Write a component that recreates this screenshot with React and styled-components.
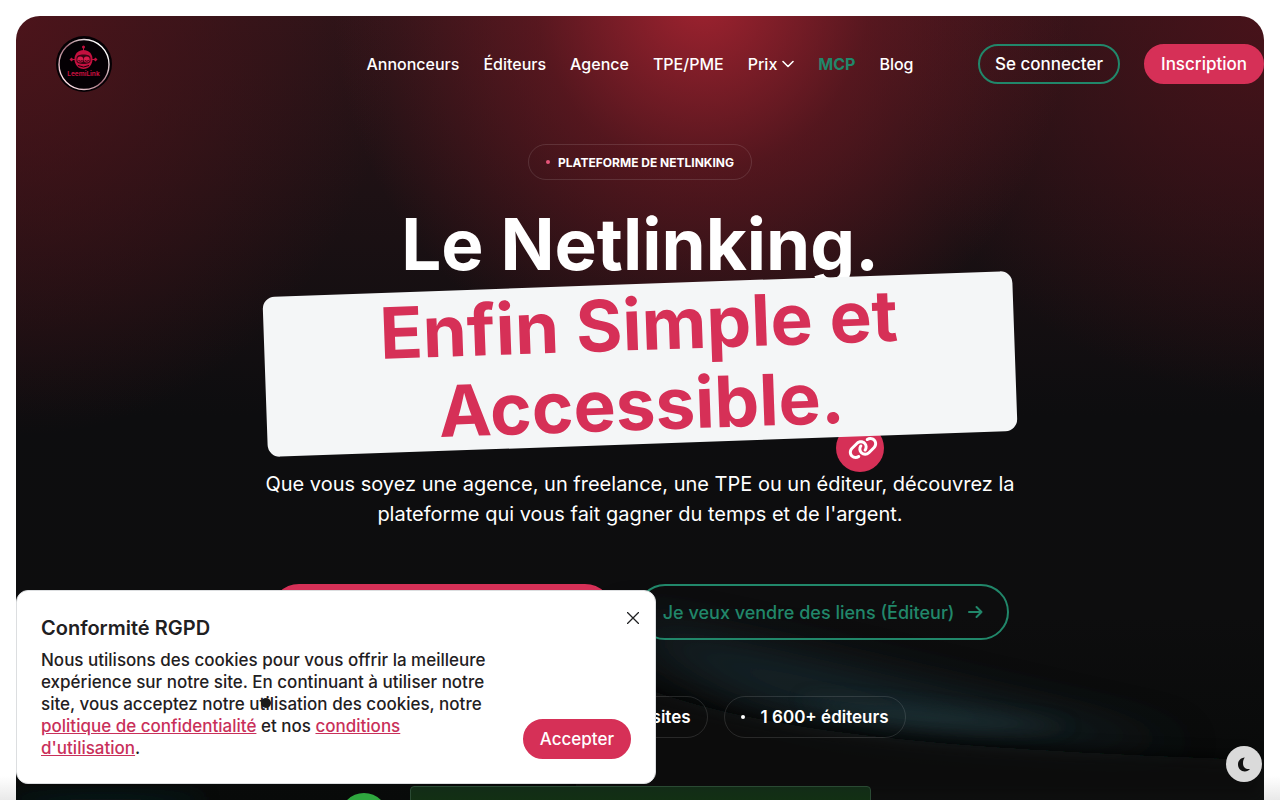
import React from 'react';
import styled, { createGlobalStyle, css } from 'styled-components';
import { FaLink } from 'react-icons/fa6';

const GlobalStyle = createGlobalStyle`
  *, *::before, *::after {
    box-sizing: border-box;
  }

  body {
    margin: 0;
    background: #fff;
    color: #1f2022;
    font-family: Inter, "Liberation Sans", sans-serif;
    font-size: 16px;
    font-weight: 500;
  }

  h1, h2, p {
    margin: 0;
  }
`;

const Page = styled.div`
  height: 100vh;
  padding: 16px 16px 0;
  overflow: hidden;
  background: linear-gradient(to top, #e9e9e9, #fff 24px);
`;

const Panel = styled.div`
  position: relative;
  height: 100%;
  border-radius: 24px 24px 0 0;
  overflow: hidden;
  background:
    radial-gradient(ellipse 370px 390px at 55% -20px, rgba(172, 36, 50, .9), rgba(125, 26, 37, .55) 45%, rgba(90, 20, 28, 0)),
    radial-gradient(ellipse 380px 420px at 0 0, rgba(82, 20, 27, .85), rgba(70, 18, 24, 0)),
    radial-gradient(ellipse 380px 380px at 100% 0, rgba(76, 18, 26, .85), rgba(70, 18, 24, 0)),
    linear-gradient(#2a1418, #0d0d0f 400px, #0d0d0e 600px, #080a09);
`;

const Glow = styled.svg`
  position: absolute;
  left: 0;
  bottom: 0;
  width: 100%;
  height: 240px;
`;

const Header = styled.header`
  position: relative;
  display: grid;
  grid-template-columns: 1fr auto 1fr;
  align-items: center;
  height: 96px;
`;

const LogoLink = styled.a`
  display: flex;
  width: 56px;
  margin-left: 40px;
`;

const Nav = styled.nav`
  display: flex;
  gap: 24px;
`;

const NavLink = styled.a`
  display: inline-flex;
  align-items: center;
  gap: 5px;
  color: ${({ $accent }) => ($accent ? '#21876a' : '#fff')};
  font-weight: ${({ $accent }) => ($accent ? 700 : 500)};
  line-height: 24px;
  text-decoration: none;
`;

const Actions = styled.div`
  display: flex;
  justify-content: flex-end;
  gap: 24px;
`;

const filled = css`
  background: #d63057;
  border: 2px solid #d63057;
  color: #fff;
`;

const outlined = css`
  background: transparent;
  border: 2px solid #21876a;
  color: ${({ $large }) => ($large ? '#21876a' : '#fff')};
`;

const Button = styled.button`
  display: inline-flex;
  align-items: center;
  justify-content: center;
  gap: 12px;
  height: ${({ $large }) => ($large ? '56px' : '40px')};
  padding: ${({ $large }) => ($large ? '0 24px' : '0 15px')};
  border-radius: 28px;
  font: inherit;
  font-size: ${({ $large }) => ($large ? '18px' : '17px')};
  white-space: nowrap;
  cursor: pointer;
  ${({ $outline }) => ($outline ? outlined : filled)}
`;

const Hero = styled.main`
  position: relative;
  display: flex;
  flex-direction: column;
  align-items: center;
  max-width: 750px;
  margin: 0 auto;
  padding-top: 32px;
`;

const Badge = styled.div`
  display: flex;
  align-items: center;
  gap: 8px;
  height: 36px;
  padding: 0 17px;
  border: 1px solid rgba(255, 255, 255, .12);
  border-radius: 18px;
  color: #fff;
  font-size: 12px;
  font-weight: 700;
`;

const Dot = styled.span`
  width: 4px;
  height: 4px;
  border-radius: 50%;
  background: ${({ $color }) => $color || '#fff'};
`;

const Title = styled.h1`
  position: relative;
  z-index: 1;
  width: 100%;
  margin-top: 24px;
  color: #fff;
  font-size: 71px;
  font-weight: 700;
  line-height: 80px;
  text-align: center;
`;

const Highlight = styled.span`
  display: block;
  padding: 0 96px;
  border-radius: 12px;
  background: #f4f6f7;
  color: #d63057;
  transform: rotate(-2deg);
`;

const LinkBubble = styled.span`
  position: absolute;
  top: 312px;
  right: 131px;
  display: flex;
  align-items: center;
  justify-content: center;
  width: 48px;
  height: 48px;
  padding-left: 5px;
  border-radius: 50%;
  background: #d63057;
  color: #fff;
`;

const Lead = styled.p`
  position: relative;
  margin-top: 25px;
  color: #fff;
  font-size: 20px;
  font-weight: 400;
  line-height: 30px;
  text-align: center;
`;

const CtaRow = styled.div`
  display: flex;
  gap: 24px;
  margin-top: 55px;
`;

const Chips = styled.ul`
  display: flex;
  gap: 16px;
  margin: 56px 0 0;
  padding: 0;
  list-style: none;
`;

const Chip = styled.li`
  display: flex;
  align-items: center;
  gap: 16px;
  height: 42px;
  padding: 0 16px;
  border: 1px solid rgba(255, 255, 255, .12);
  border-radius: 21px;
  color: #fff;
  font-size: 17px;
  font-weight: 600;
  white-space: nowrap;
`;

const Showcase = styled.div`
  display: flex;
  gap: 22px;
  width: 600px;
  margin-top: 48px;
`;

const Avatar = styled.span`
  width: 48px;
  height: 48px;
  margin-top: 7px;
  border-radius: 50%;
  background: #2fa83f;
`;

const ShowcaseCard = styled.div`
  width: 461px;
  height: 120px;
  border: 1px solid #2a4a33;
  border-radius: 4px;
  background: linear-gradient(#122c17, #12340f 30px);
`;

const CookieBox = styled.section`
  position: fixed;
  left: 16px;
  bottom: 16px;
  display: flex;
  align-items: flex-end;
  justify-content: space-between;
  width: 640px;
  max-width: calc(100% - 32px);
  padding: 24px;
  border: 1px solid #dcdee0;
  border-radius: 12px;
  background: #fff;
`;

const CookieText = styled.div`
  width: 458px;
  font-size: 17px;
  line-height: 22px;
`;

const CookieTitle = styled.h2`
  margin-bottom: 8px;
  font-size: 20px;
  font-weight: 600;
  line-height: 26px;
`;

const TextLink = styled.a`
  color: #c9305a;
`;

const CloseButton = styled.button`
  position: absolute;
  top: 15px;
  right: 10px;
  display: flex;
  align-items: center;
  justify-content: center;
  width: 24px;
  height: 24px;
  padding: 0;
  border: 0;
  background: none;
  cursor: pointer;
`;

const ThemeButton = styled.button`
  position: fixed;
  right: 18px;
  bottom: 18px;
  display: flex;
  align-items: center;
  justify-content: center;
  width: 36px;
  height: 36px;
  padding: 0;
  border: 0;
  border-radius: 50%;
  background: #dadada;
  cursor: pointer;
`;

const CursorDot = styled.span`
  position: fixed;
  top: 698px;
  left: 261px;
  width: 10px;
  height: 10px;
  border-radius: 50%;
  background: #1b1b1b;
  pointer-events: none;
`;

const LogoMark = () => (
  <svg width="56" height="56" viewBox="0 0 56 56" role="img" aria-label="LeemiLink">
    <defs>
      <linearGradient id="ring" x1="0" y1="1" x2="1" y2="0">
        <stop offset="0" stopColor="#d9a5b2" />
        <stop offset=".15" stopColor="#f9dbe2" />
        <stop offset=".5" stopColor="#a06a78" />
        <stop offset=".85" stopColor="#fff" />
        <stop offset="1" stopColor="#c98d9c" />
      </linearGradient>
    </defs>
    <circle cx="28" cy="28" r="28" fill="#050004" />
    <circle cx="28" cy="28.500" r="25" fill="none" stroke="url(#ring)" strokeWidth="1.400" />
    <g fill="#c4103f">
      <circle cx="27.500" cy="11" r="1.500" />
      <path d="M27 11h1v4h-1z" />
      <path d="M13.500 23.500l2-2 2 2-2 2zM37.500 23.500l2-2 2 2-2 2z" />
      <path d="M16 23h3v1h-3zM36 23h3v1h-3z" />
      <path d="M27.500 14c-5 0-9 3.800-9 9 0 6 4 10 9 10s9-4 9-10c0-5.200-4-9-9-9z" />
    </g>
    <path d="M20.500 22c0-2.500 3-3.500 7-3.500s7 1 7 3.500v3c0 2-3 3-7 3s-7-1-7-3z" fill="#3a0413" />
    <circle cx="24.300" cy="23.500" r="3" fill="#d91a4b" />
    <circle cx="30.700" cy="23.500" r="3" fill="#d91a4b" />
    <path d="M22.500 24.500q2 1.500 4 0M28.800 24.500q2 1.500 4 0" fill="none" stroke="#2a0410" />
    <path d="M22 29.500q5.500 3 11 0" fill="none" stroke="#14000a" />
    <text x="27.500" y="40" fill="#c4103f" fontSize="6.500" fontWeight="700" textAnchor="middle">LeemiLink</text>
  </svg>
);

const Chevron = () => (
  <svg width="12" height="8" viewBox="0 0 12 8" fill="none" stroke="currentColor" strokeWidth="1.600" strokeLinecap="round" strokeLinejoin="round">
    <path d="M1 1.500l5 5 5-5" />
  </svg>
);

const Arrow = () => (
  <svg width="16" height="14" viewBox="0 0 16 14" fill="none" stroke="currentColor" strokeWidth="2" strokeLinecap="round" strokeLinejoin="round">
    <path d="M2 7h12.500M9.500 2l5 5-5 5" />
  </svg>
);

const CloseIcon = () => (
  <svg width="12" height="12" viewBox="0 0 12 12" stroke="#1f2022" strokeWidth="1.300" strokeLinecap="round">
    <path d="M.5.5l11 11M11.500.5l-11 11" />
  </svg>
);

const MoonIcon = () => (
  <svg width="14" height="15" viewBox="0 0 14 15" fill="#111">
    <path d="M7.800.4C3.600.6 1 3.600 1 7.400c0 4 3 7 6.800 7 2.200 0 4-.8 5.200-2.400-4.200.6-7-1.800-7-5.800 0-2.400.6-4.400 1.800-5.800z" />
  </svg>
);

const BackgroundGlow = () => (
  <Glow viewBox="0 0 1248 240" preserveAspectRatio="none" aria-hidden="true">
    <defs>
      <filter id="soft" x="-30%" y="-60%" width="160%" height="220%">
        <feGaussianBlur stdDeviation="20" />
      </filter>
      <filter id="edge" x="-20%" y="-60%" width="140%" height="220%">
        <feGaussianBlur stdDeviation="9" />
      </filter>
    </defs>
    <path d="M600 60C720 75 860 115 1180 185C1060 182 900 185 760 150C690 125 640 95 600 60z" fill="#1b363c" opacity=".55" filter="url(#soft)" />
    <path d="M780 138C880 144 960 154 1060 166C960 174 870 168 780 138z" fill="#2c464b" opacity=".45" filter="url(#edge)" />
    <path d="M560 100C700 165 840 186 1248 200V240H560z" fill="#080a09" opacity=".85" filter="url(#edge)" />
    <ellipse cx="90" cy="240" rx="100" ry="6" fill="#0c2a2e" opacity=".6" filter="url(#edge)" />
  </Glow>
);

const links = [
  { label: 'Annonceurs' },
  { label: 'Éditeurs' },
  { label: 'Agence' },
  { label: 'TPE/PME' },
  { label: 'Prix', menu: true },
  { label: 'MCP', accent: true },
  { label: 'Blog' }
];

const chips = ['Netlinking', '200 000+ sites', '1 600+ éditeurs'];

const App = () => (
  <Page>
    <GlobalStyle />
    <Panel>
      <BackgroundGlow />
      <Header>
        <LogoLink href="#">
          <LogoMark />
        </LogoLink>
        <Nav>
          {links.map(({ label, menu, accent }) => (
            <NavLink key={label} href="#" $accent={accent}>
              {label}
              {menu && <Chevron />}
            </NavLink>
          ))}
        </Nav>
        <Actions>
          <Button type="button" $outline>Se connecter</Button>
          <Button type="button">Inscription</Button>
        </Actions>
      </Header>
      <Hero>
        <Badge>
          <Dot $color="#e8557a" />
          PLATEFORME DE NETLINKING
        </Badge>
        <Title>
          Le Netlinking.
          <Highlight>Enfin Simple et Accessible.</Highlight>
        </Title>
        <LinkBubble>
          <FaLink size={30} />
        </LinkBubble>
        <Lead>
          Que vous soyez une agence, un freelance, une TPE ou un éditeur, découvrez la
          plateforme qui vous fait gagner du temps et de l'argent.
        </Lead>
        <CtaRow>
          <Button type="button" $large>
            Je veux des liens (Annonceur)
            <Arrow />
          </Button>
          <Button type="button" $large $outline>
            Je veux vendre des liens (Éditeur)
            <Arrow />
          </Button>
        </CtaRow>
        <Chips>
          {chips.map(chip => (
            <Chip key={chip}>
              <Dot />
              {chip}
            </Chip>
          ))}
        </Chips>
        <Showcase>
          <Avatar />
          <ShowcaseCard />
        </Showcase>
      </Hero>
    </Panel>
    <CookieBox aria-labelledby="cookie-title">
      <CookieText>
        <CookieTitle id="cookie-title">Conformité RGPD</CookieTitle>
        <p>
          Nous utilisons des cookies pour vous offrir la meilleure expérience sur notre site.
          En continuant à utiliser notre site, vous acceptez notre utilisation des cookies, notre{' '}
          <TextLink href="#">politique de confidentialité</TextLink> et nos{' '}
          <TextLink href="#">conditions d'utilisation</TextLink>.
        </p>
      </CookieText>
      <Button type="button">Accepter</Button>
      <CloseButton type="button" aria-label="Fermer">
        <CloseIcon />
      </CloseButton>
    </CookieBox>
    <ThemeButton type="button" aria-label="Changer de thème">
      <MoonIcon />
    </ThemeButton>
    <CursorDot />
  </Page>
);

export default App;
